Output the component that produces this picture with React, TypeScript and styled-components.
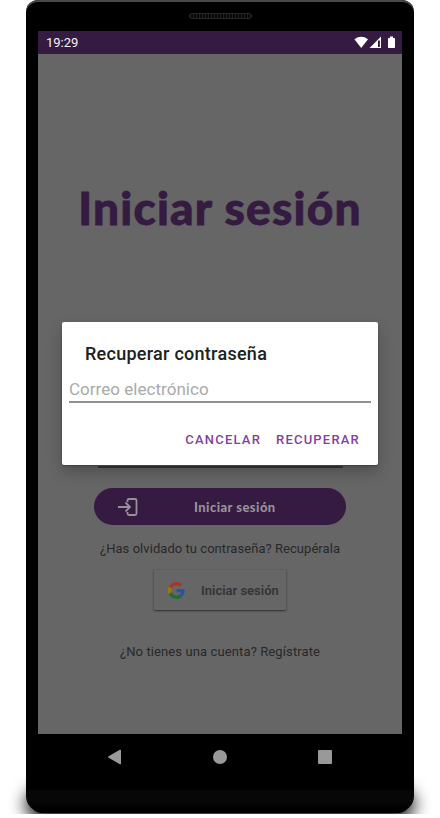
import React from "react";
import styled, { createGlobalStyle } from "styled-components";

const GlobalStyle = createGlobalStyle`
  * { box-sizing: border-box; }
  body { margin: 0; background: #fff; font-family: Roboto, "Liberation Sans", sans-serif; overflow: hidden; }
`;

const Stage = styled.main`
  width: 440px;
  height: 818px;
  padding: 0 26px;
  overflow: hidden;
  position: relative;
`;

const GroundShadow = styled.div`
  position: absolute;
  left: 32px;
  top: 796px;
  width: 376px;
  height: 17px;
  border-radius: 14px;
  background: #000;
  box-shadow: 0 0 17px 6px #000;
  clip-path: inset(-20px -30px -1px -30px);
`;

const Phone = styled.div`
  position: relative;
  width: 388px;
  height: 812px;
  padding: 0 12px;
  display: flex;
  flex-direction: column;
  background: linear-gradient(#000 0 789px, #070707 791px 801px, #000 809px);
  border-radius: 12px 12px 16px 16px;
  box-shadow: inset 0 2px 0 #494949;
`;

const Top = styled.div`
  height: 31px;
  display: flex;
  justify-content: center;
  padding-top: 13px;
`;

const Speaker = styled.div`
  width: 63px;
  height: 6px;
  border: 1px solid #292929;
  border-radius: 3px;
  background: repeating-linear-gradient(90deg, #202020 0 1px, #080808 1px 3px);
`;

const Screen = styled.div`
  position: relative;
  height: 703px;
  display: flex;
  flex-direction: column;
  background: #666;
`;

const StatusBar = styled.header`
  height: 23px;
  padding: 0 6px 0 8px;
  display: flex;
  align-items: center;
  justify-content: space-between;
  background: #351a42;
  color: #f5f2f6;
  font-size: 13px;
`;

const Login = styled.section`
  display: flex;
  flex-direction: column;
  align-items: center;
`;

const Title = styled.h1`
  margin: 122px 0 0;
  height: 64px;
  line-height: 64px;
  white-space: nowrap;
  font-family: Lato, "Open Sans", sans-serif;
  font-size: 46px;
  font-weight: 900;
  letter-spacing: 1.2px;
  -webkit-text-stroke: 0.8px #351a42;
  color: #351a42;
`;

const FieldLine = styled.div`
  width: 245px;
  height: 2px;
  margin-top: 226px;
  background: #363839;
`;

const PillButton = styled.button`
  width: 252px;
  height: 37px;
  margin: 20px 0 0;
  padding: 1px 0 0 21px;
  display: flex;
  align-items: center;
  gap: 54px;
  border: 0;
  border-radius: 19px;
  background: #351a42;
  color: #969199;
  font: 900 13px Lato, sans-serif;
  letter-spacing: 0.45px;
  white-space: nowrap;
`;

const Prompt = styled.p<{ $top: number; $spacing: number }>`
  margin: ${(p) => p.$top}px 0 0;
  height: 18px;
  line-height: 18px;
  font-size: 13px;
  letter-spacing: ${(p) => p.$spacing}px;
  color: #28282a;
  white-space: nowrap;
`;

const GoogleButton = styled.button`
  width: 132px;
  height: 40px;
  margin: 12px 0 0;
  padding: 0 0 0 14px;
  display: flex;
  align-items: center;
  gap: 16px;
  border: 0;
  border-radius: 1px;
  background: #666;
  box-shadow: 0 1px 2px #303030, 0 0 1px #4a4a4a;
  color: #343434;
  font: 600 13px Roboto, sans-serif;
  white-space: nowrap;
`;

const Dialog = styled.section`
  position: absolute;
  left: 24px;
  top: 291px;
  width: 316px;
  height: 143px;
  padding: 20px 7px 0;
  display: flex;
  flex-direction: column;
  border-radius: 2px;
  background: #fff;
  box-shadow: 0 7px 16px rgba(0, 0, 0, 0.24), 0 1px 2px rgba(0, 0, 0, 0.25);
`;

const DialogTitle = styled.h2`
  margin: 0 0 0 16px;
  height: 23px;
  line-height: 23px;
  font-size: 18px;
  font-weight: 500;
  letter-spacing: 0.27px;
  color: #202020;
`;

const Email = styled.input`
  height: 38px;
  padding: 11px 0 0 0;
  border: 0;
  border-bottom: 2px solid #909097;
  background: transparent;
  font: 400 17px Roboto, sans-serif;
  letter-spacing: 0.03px;
  outline: none;
  &::placeholder { color: #aaa; opacity: 1; }
`;

const Actions = styled.div`
  margin-top: 27px;
  padding-right: 11px;
  display: flex;
  justify-content: flex-end;
  gap: 15px;
`;

const Action = styled.button`
  height: 20px;
  padding: 0;
  border: 0;
  background: transparent;
  color: #843fa5;
  font: 500 13px/20px Roboto, sans-serif;
  letter-spacing: 1.2px;
`;

const NavBar = styled.nav`
  height: 45px;
  padding: 0 70px 0 69px;
  display: flex;
  align-items: center;
  justify-content: space-between;
`;

export default function App() {
  return (
    <Stage>
      <GlobalStyle />
      <GroundShadow />
      <Phone>
        <Top><Speaker /></Top>
        <Screen>
          <StatusBar>
            <span>19:29</span>
            <svg width="42" height="13" viewBox="0 0 42 13" fill="#fff">
              <path d="M.4 3.2Q7.2-1.5 14 3.2L7.2 12Z" />
              <path d="M27 .6V12H15.6Z" />
              <path d="M24 4.6h1.9v6.3H24z" fill="#351a42" />
              <path d="M36 .5h3V2h1.3q.7 0 .7.7v8.6q0 .7-.7.7h-5.6q-.7 0-.7-.7V2.700q0-.7.7-.7H36z" />
            </svg>
          </StatusBar>
          <Login>
            <Title>Iniciar sesión</Title>
            <FieldLine />
            <PillButton>
              <svg width="25" height="20" viewBox="0 0 25 20" fill="none" stroke="#969199" strokeWidth="1.8">
                <path d="M3 10h12M10.500 5.500l4.500 4.500L10.500 14.500M12.500 5V3.500q0-1.500 1.500-1.500h6q1.500 0 1.500 1.500v13q0 1.500-1.500 1.500h-6q-1.500 0-1.500-1.500V15" />
              </svg>
              <span>Iniciar sesión</span>
            </PillButton>
            <Prompt $top={15} $spacing={0.05}>¿Has olvidado tu contraseña? Recupérala</Prompt>
            <GoogleButton>
              <svg width="17" height="17" viewBox="0 0 48 48">
                <path fill="#a9342b" d="M24 9.500c3.540 0 6.710 1.220 9.210 3.600l6.850-6.850C35.900 2.380 30.470 0 24 0 14.620 0 6.510 5.380 2.560 13.220l7.980 6.190C12.430 13.720 17.740 9.500 24 9.500z" />
                <path fill="#2955a0" d="M46.980 24.550c0-1.570-.15-3.090-.38-4.550H24v9.020h12.940c-.58 2.960-2.260 5.480-4.780 7.180l7.730 6c4.510-4.180 7.090-10.360 7.090-17.650z" />
                <path fill="#a27803" d="M10.530 28.590A14.500 14.500 0 0 1 9.770 24c0-1.600.27-3.140.76-4.590l-7.980-6.190A23.990 23.990 0 0 0 0 24c0 3.880.92 7.540 2.560 10.780z" />
                <path fill="#216d36" d="M24 48c6.480 0 11.930-2.130 15.890-5.810l-7.730-6c-2.150 1.450-4.920 2.300-8.160 2.300-6.260 0-11.570-4.220-13.470-9.910l-7.980 6.190C6.510 42.620 14.620 48 24 48z" />
              </svg>
              <span>Iniciar sesión</span>
            </GoogleButton>
            <Prompt $top={33} $spacing={0.11}>¿No tienes una cuenta? Regístrate</Prompt>
          </Login>
          <Dialog role="dialog">
            <DialogTitle>Recuperar contraseña</DialogTitle>
            <Email placeholder="Correo electrónico" />
            <Actions>
              <Action>CANCELAR</Action>
              <Action>RECUPERAR</Action>
            </Actions>
          </Dialog>
        </Screen>
        <NavBar>
          <svg width="15" height="16" viewBox="0 0 15 16"><path d="M1.600 7.200 12.800.8q1.200-.5 1.200.7v13q0 1.200-1.200.7L1.600 8.800q-1-.8 0-1.600z" fill="#999" /></svg>
          <svg width="14" height="14"><circle cx="7" cy="7" r="7" fill="#999" /></svg>
          <svg width="14" height="14"><rect width="14" height="14" rx="1" fill="#999" /></svg>
        </NavBar>
      </Phone>
    </Stage>
  );
}
